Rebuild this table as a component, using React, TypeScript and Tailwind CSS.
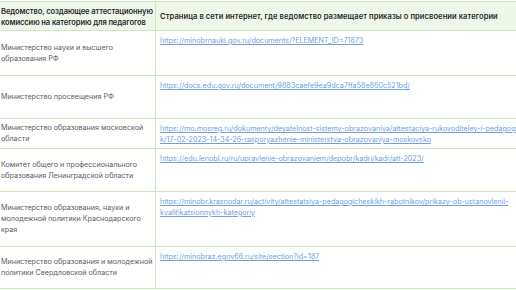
import React from 'react';

type Row = { name: string; link: string[]; h: string };

const ROWS: Row[] = [
  {
    name: 'Министерство науки и высшего образования РФ',
    link: ['https://minobrnauki.gov.ru/documents/?ELEMENT_ID=71873'],
    h: 'h-[45px]',
  },
  {
    name: 'Министерство просвещения РФ',
    link: ['https://docs.edu.gov.ru/document/9883caefe9ea9dca7ffa58e860c521bd/'],
    h: 'h-[43px]',
  },
  {
    name: 'Министерство образования московской области',
    link: [
      'https://mo.mosreg.ru/dokumenty/deyatelnost-sistemy-obrazovaniya/attestaciya-rukovoditeley-i-pedagogic',
      'k/17-02-2023-14-34-26-rasporyazhenie-ministerstva-obrazovaniya-moskovsko',
    ],
    h: 'h-[30px]',
  },
  {
    name: 'Комитет общего и профессионального образования Ленинградской области',
    link: ['https://edu.lenobl.ru/ru/upravlenie-obrazovaniem/depobr/kadri/kadr/att-2023/'],
    h: 'h-[43px]',
  },
  {
    name: 'Министерство образования, науки и молодежной политики Краснодарского края',
    link: [
      'https://minobr.krasnodar.ru/activity/attestatsiya-pedagogicheskikh-rabotnikov/prikazy-ob-ustanovlenii-',
      'kvalifikatsionnykh-kategoriy',
    ],
    h: 'h-[55px]',
  },
  {
    name: 'Министерство образования и молодежной политики Свердловской области',
    link: ['https://minobraz.egov66.ru/site/section?id=187'],
    h: 'h-[42px]',
  },
];

const App: React.FC = () => {
  return (
    <div className="w-[516px] h-[290px] overflow-hidden bg-white pt-[1px] font-['Inter','Noto_Sans',sans-serif] text-[7.15px] leading-[10.7px]">
      <table className="border-collapse w-[780px] ml-[-4px] table-fixed">
        <colgroup>
          <col className="w-[159px]" />
          <col />
        </colgroup>
        <thead>
          <tr className="h-[29px] bg-[#eff7eb]">
            <th className="border border-[#cde8bf] pl-[4px] pr-[1px] pt-[2px] text-left align-middle text-[7.6px] leading-[11.4px] font-semibold tracking-[-0.12px] text-[#2b2b2b]">
              Ведомство, создающее аттестационную комиссию на категорию для педагогов
            </th>
            <th className="border border-[#cde8bf] pl-[4px] pt-[2px] text-left align-middle text-[7.6px] leading-[11.4px] font-semibold tracking-[0.05px] text-[#2b2b2b]">
              Страница в сети интернет, где ведомство размещает приказы о присвоении категории
            </th>
          </tr>
        </thead>
        <tbody>
          {ROWS.map((r) => (
            <tr key={r.name} className={r.h}>
              <td className="border border-[#cde8bf] pl-[4px] pr-[1px] pt-[1px] align-middle text-[#5e5e5e]">
                {r.name}
              </td>
              <td className="border border-[#cde8bf] pl-[4px] pt-[5px] align-top">
                {r.link.map((l) => (
                  <a key={l} className="block whitespace-nowrap text-[#6f9fe0] underline underline-offset-[1px]">
                    {l}
                  </a>
                ))}
              </td>
            </tr>
          ))}
        </tbody>
      </table>
    </div>
  );
};

export default App;
